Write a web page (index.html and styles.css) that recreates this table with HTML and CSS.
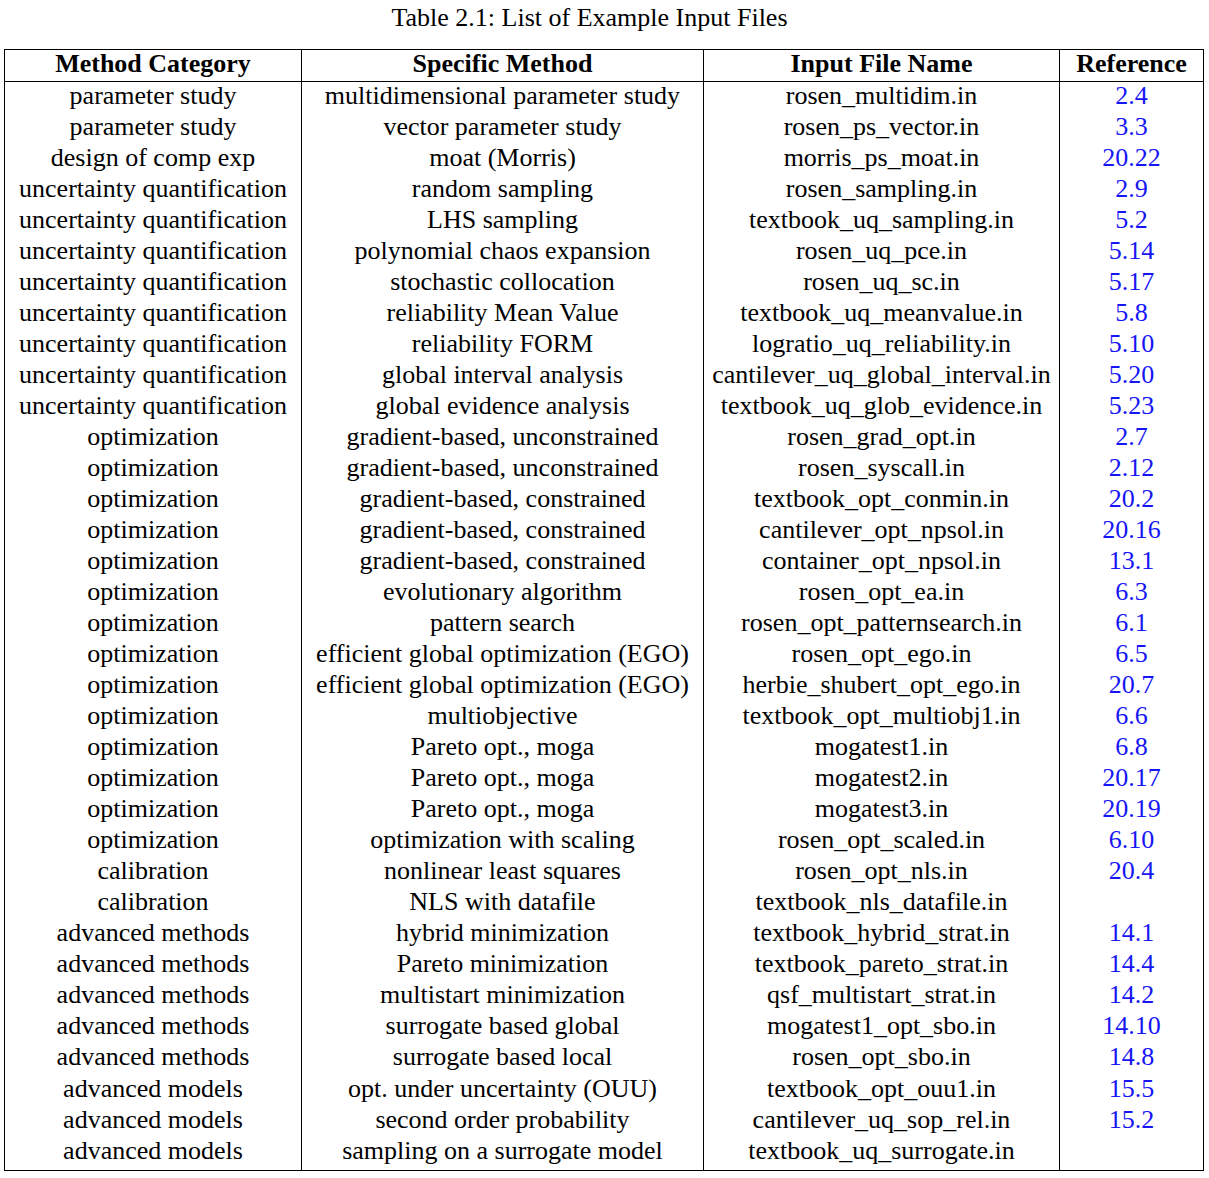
FILE: index.html
```html
<!DOCTYPE html>
<html lang="en">
<head>
    <meta charset="UTF-8">
    <title>List of Example Input Files</title>
    <link rel="stylesheet" href="styles.css">
</head>
<body>
    <div class="caption">Table 2.1: List of Example Input Files</div>
    <table class="files">
        <colgroup>
            <col class="col-cat">
            <col class="col-method">
            <col class="col-file">
            <col class="col-ref">
        </colgroup>
        <thead>
            <tr>
                <th>Method Category</th>
                <th>Specific Method</th>
                <th>Input File Name</th>
                <th>Reference</th>
            </tr>
        </thead>
        <tbody>
            <tr><td>parameter study</td><td>multidimensional parameter study</td><td>rosen_multidim.in</td><td><a href="#">2.4</a></td></tr>
            <tr><td>parameter study</td><td>vector parameter study</td><td>rosen_ps_vector.in</td><td><a href="#">3.3</a></td></tr>
            <tr><td>design of comp exp</td><td>moat (Morris)</td><td>morris_ps_moat.in</td><td><a href="#">20.22</a></td></tr>
            <tr><td>uncertainty quantification</td><td>random sampling</td><td>rosen_sampling.in</td><td><a href="#">2.9</a></td></tr>
            <tr><td>uncertainty quantification</td><td>LHS sampling</td><td>textbook_uq_sampling.in</td><td><a href="#">5.2</a></td></tr>
            <tr><td>uncertainty quantification</td><td>polynomial chaos expansion</td><td>rosen_uq_pce.in</td><td><a href="#">5.14</a></td></tr>
            <tr><td>uncertainty quantification</td><td>stochastic collocation</td><td>rosen_uq_sc.in</td><td><a href="#">5.17</a></td></tr>
            <tr><td>uncertainty quantification</td><td>reliability Mean Value</td><td>textbook_uq_meanvalue.in</td><td><a href="#">5.8</a></td></tr>
            <tr><td>uncertainty quantification</td><td>reliability FORM</td><td>logratio_uq_reliability.in</td><td><a href="#">5.10</a></td></tr>
            <tr><td>uncertainty quantification</td><td>global interval analysis</td><td>cantilever_uq_global_interval.in</td><td><a href="#">5.20</a></td></tr>
            <tr><td>uncertainty quantification</td><td>global evidence analysis</td><td>textbook_uq_glob_evidence.in</td><td><a href="#">5.23</a></td></tr>
            <tr><td>optimization</td><td>gradient-based, unconstrained</td><td>rosen_grad_opt.in</td><td><a href="#">2.7</a></td></tr>
            <tr><td>optimization</td><td>gradient-based, unconstrained</td><td>rosen_syscall.in</td><td><a href="#">2.12</a></td></tr>
            <tr><td>optimization</td><td>gradient-based, constrained</td><td>textbook_opt_conmin.in</td><td><a href="#">20.2</a></td></tr>
            <tr><td>optimization</td><td>gradient-based, constrained</td><td>cantilever_opt_npsol.in</td><td><a href="#">20.16</a></td></tr>
            <tr><td>optimization</td><td>gradient-based, constrained</td><td>container_opt_npsol.in</td><td><a href="#">13.1</a></td></tr>
            <tr><td>optimization</td><td>evolutionary algorithm</td><td>rosen_opt_ea.in</td><td><a href="#">6.3</a></td></tr>
            <tr><td>optimization</td><td>pattern search</td><td>rosen_opt_patternsearch.in</td><td><a href="#">6.1</a></td></tr>
            <tr><td>optimization</td><td>efficient global optimization (EGO)</td><td>rosen_opt_ego.in</td><td><a href="#">6.5</a></td></tr>
            <tr><td>optimization</td><td>efficient global optimization (EGO)</td><td>herbie_shubert_opt_ego.in</td><td><a href="#">20.7</a></td></tr>
            <tr><td>optimization</td><td>multiobjective</td><td>textbook_opt_multiobj1.in</td><td><a href="#">6.6</a></td></tr>
            <tr><td>optimization</td><td>Pareto opt., moga</td><td>mogatest1.in</td><td><a href="#">6.8</a></td></tr>
            <tr><td>optimization</td><td>Pareto opt., moga</td><td>mogatest2.in</td><td><a href="#">20.17</a></td></tr>
            <tr><td>optimization</td><td>Pareto opt., moga</td><td>mogatest3.in</td><td><a href="#">20.19</a></td></tr>
            <tr><td>optimization</td><td>optimization with scaling</td><td>rosen_opt_scaled.in</td><td><a href="#">6.10</a></td></tr>
            <tr><td>calibration</td><td>nonlinear least squares</td><td>rosen_opt_nls.in</td><td><a href="#">20.4</a></td></tr>
            <tr><td>calibration</td><td>NLS with datafile</td><td>textbook_nls_datafile.in</td><td></td></tr>
            <tr><td>advanced methods</td><td>hybrid minimization</td><td>textbook_hybrid_strat.in</td><td><a href="#">14.1</a></td></tr>
            <tr><td>advanced methods</td><td>Pareto minimization</td><td>textbook_pareto_strat.in</td><td><a href="#">14.4</a></td></tr>
            <tr><td>advanced methods</td><td>multistart minimization</td><td>qsf_multistart_strat.in</td><td><a href="#">14.2</a></td></tr>
            <tr><td>advanced methods</td><td>surrogate based global</td><td>mogatest1_opt_sbo.in</td><td><a href="#">14.10</a></td></tr>
            <tr><td>advanced methods</td><td>surrogate based local</td><td>rosen_opt_sbo.in</td><td><a href="#">14.8</a></td></tr>
            <tr><td>advanced models</td><td>opt. under uncertainty (OUU)</td><td>textbook_opt_ouu1.in</td><td><a href="#">15.5</a></td></tr>
            <tr><td>advanced models</td><td>second order probability</td><td>cantilever_uq_sop_rel.in</td><td><a href="#">15.2</a></td></tr>
            <tr><td>advanced models</td><td>sampling on a surrogate model</td><td>textbook_uq_surrogate.in</td><td></td></tr>
        </tbody>
    </table>
</body>
</html>
```

FILE: styles.css
```css
body {
    font-family: "Liberation Serif", "Times New Roman", serif;
    font-size: 26px;
    color: #000;
    margin: 0;
    padding: 0;
    background: #fff;
}
.caption {
    text-align: center;
    padding-right: 30px;
    height: 49px;
    line-height: 36px;
}
.files {
    border-collapse: collapse;
    margin-left: 4px;
    width: 1199px;
    table-layout: fixed;
}
.col-cat {
    width: 297px;
}
.col-method {
    width: 402px;
}
.col-file {
    width: 356px;
}
.col-ref {
    width: 144px;
}
.files th,
.files td {
    border-left: 1px solid #000;
    border-right: 1px solid #000;
    text-align: center;
    padding: 0;
    white-space: nowrap;
    vertical-align: top;
}
.files th {
    font-weight: bold;
    border-top: 1px solid #000;
    border-bottom: 1px solid #000;
    height: 31px;
    line-height: 28px;
}
.files td {
    height: 31.03px;
    line-height: 28px;
}
.files tbody tr:last-child td {
    height: 33px;
    border-bottom: 1px solid #000;
}
.files a {
    color: #1515f5;
    text-decoration: none;
}
```
